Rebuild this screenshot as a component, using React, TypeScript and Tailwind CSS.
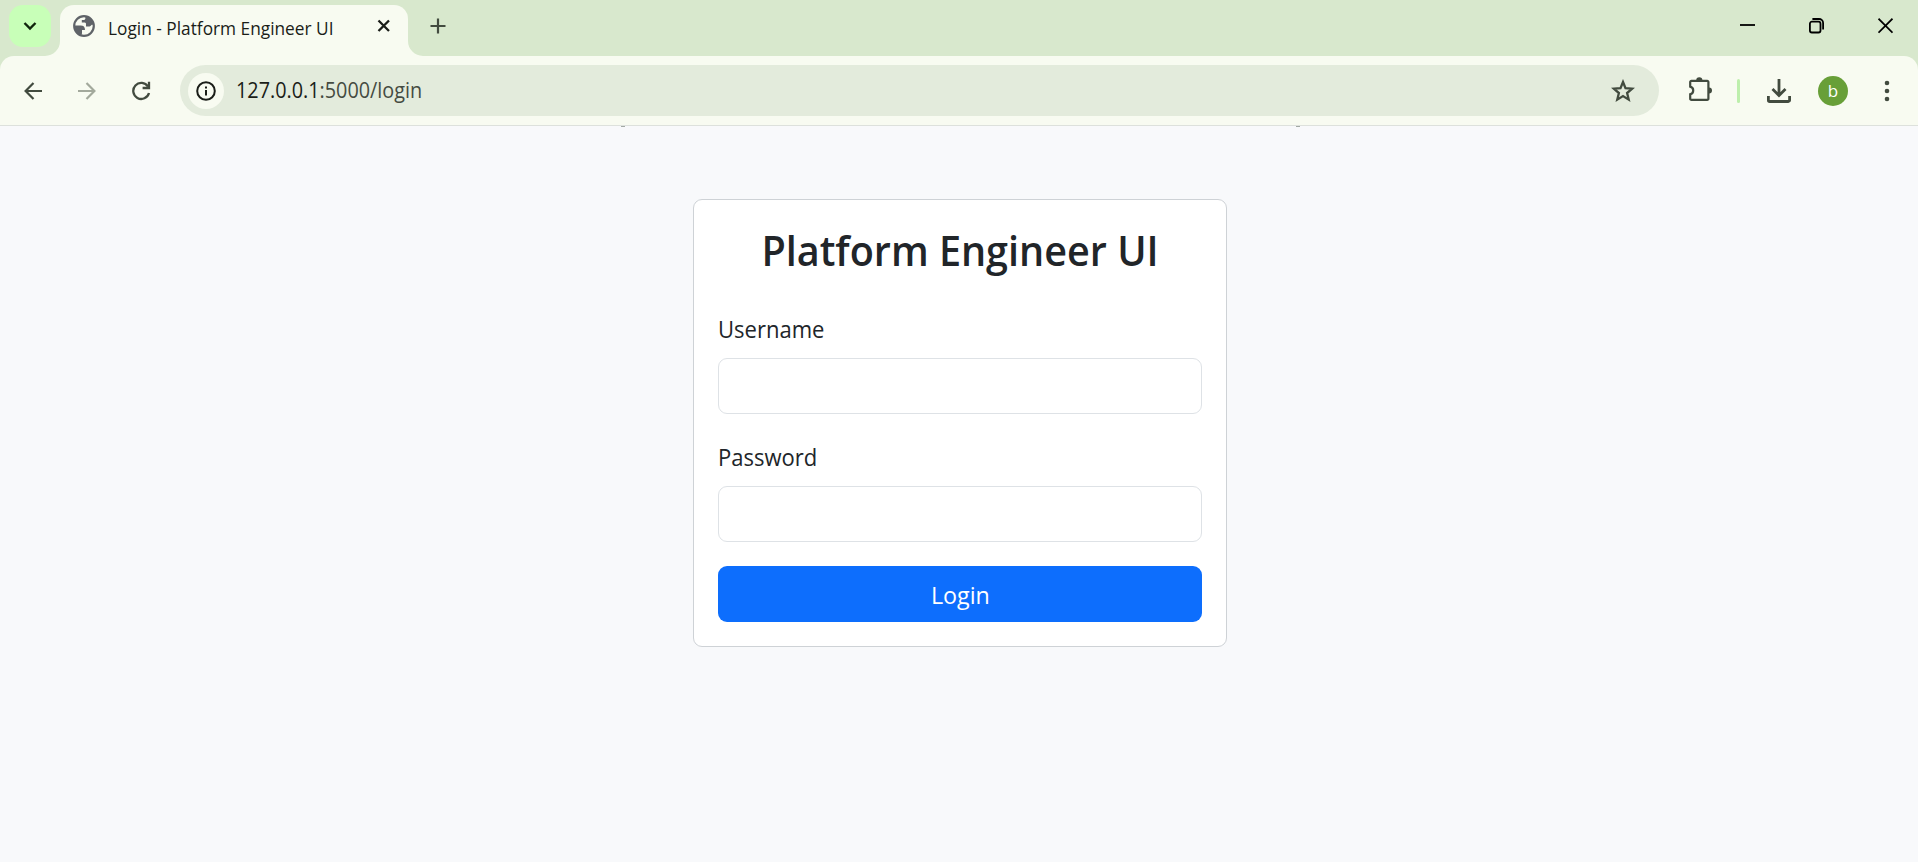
const ink = "#424b3f";

function Globe() {
  return (
    <svg width="22" height="22" viewBox="0 0 22 22">
      <circle cx="11" cy="11" r="9.8" fill="none" stroke="#5f6368" strokeWidth="2.2" />
      <path d="M1 10.6H7.6C10.6 10.6 12 12 12 15H9V18.2L8.4 20.6A10 10 0 0 1 1 10.6Z" fill="#5f6368" />
      <path d="M12.4 1.4V3.2C12.4 4.6 11.4 5 10 5H8.8V7.6H11.6C12.8 7.6 13 8.4 13 9.4V11.4H16.4C17.6 11.4 18 10.2 18.8 9.8H21A10 10 0 0 0 12.4 1.4Z" fill="#5f6368" />
    </svg>
  );
}

function TabStrip() {
  return (
    <header className="flex h-14 items-stretch bg-[#d8e8cd] text-[#1a1d18]">
      <button className="mt-[5px] ml-[9px] flex h-[42px] w-[42px] items-center justify-center rounded-[14px] bg-[#c8ffb8]">
        <svg width="14" height="10" viewBox="0 0 14 10" fill="none" stroke="#10240c" strokeWidth="2.4">
          <path d="M1.5 2 7 7.5 12.5 2" />
        </svg>
      </button>
      <div className="relative mt-[5px] ml-[9px] flex h-[51px] w-[348px] rounded-t-[14px] bg-[#f8fbf1]">
        <svg className="absolute bottom-0 -left-[15px]" width="15" height="15" viewBox="0 0 15 15">
          <path d="M15 0V15H0A15 15 0 0 0 15 0Z" fill="#f8fbf1" />
        </svg>
        <svg className="absolute -right-[15px] bottom-0" width="15" height="15" viewBox="0 0 15 15">
          <path d="M0 0V15H15A15 15 0 0 1 0 0Z" fill="#f8fbf1" />
        </svg>
        <div className="flex h-[42px] w-full items-center pl-[13px]">
          <Globe />
          <span className="mt-[3px] ml-[13px] w-[240px] origin-left scale-x-[0.96] text-[18px] leading-6 whitespace-nowrap">Login - Platform Engineer UI</span>
          <svg className="ml-[29px]" width="14" height="14" viewBox="0 0 14 14" stroke="#1a1d18" strokeWidth="2.3">
            <path d="M1.5 1.5 12 12M12 1.5 1.5 12" />
          </svg>
        </div>
      </div>
      <svg className="mt-[18px] ml-[22px]" width="16" height="16" viewBox="0 0 16 16" stroke={ink} strokeWidth="2.2">
        <path d="M8 .5V15.5M.5 8H15.5" />
      </svg>
      <div className="mt-[18px] ml-auto flex h-4 items-center pr-[25px]">
        <svg width="15" height="16" viewBox="0 0 15 16" stroke="#000" strokeWidth="1.8">
          <path d="M0 7H15" />
        </svg>
        <svg className="ml-[54px]" width="15" height="16" viewBox="0 0 15 16" fill="none" stroke="#000" strokeWidth="1.8">
          <rect x=".9" y="3.7" width="10.6" height="10.8" rx="2" />
          <path d="M3.4 1H10A4.1 4.1 0 0 1 14.1 5.1V11.6" />
        </svg>
        <svg className="ml-[54px]" width="15" height="16" viewBox="0 0 15 16" stroke="#000" strokeWidth="1.8">
          <path d="M.5 .7 14.5 14.7M14.5 .7 .5 14.7" />
        </svg>
      </div>
    </header>
  );
}

function Toolbar() {
  return (
    <div className="bg-[#d8e8cd]">
      <nav className="flex h-[70px] items-center rounded-t-[14px] border-b border-[#dde1dc] bg-[#f8fbf1]">
        <svg className="ml-6" width="18" height="18" viewBox="0 0 18 18" fill="none" stroke={ink} strokeWidth="2.2">
          <path d="M18 9H1.8M9.5 1 1.6 9 9.5 17" />
        </svg>
        <svg className="ml-9" width="18" height="18" viewBox="0 0 18 18" fill="none" stroke="#a3a99c" strokeWidth="2.2">
          <path d="M0 9H16.2M8.5 1 16.4 9 8.5 17" />
        </svg>
        <svg className="ml-9" width="19" height="20" viewBox="0 0 19 20" fill="none" stroke={ink} strokeWidth="2.3">
          <path d="M16 5.6A8 8 0 1 0 17 12" />
          <path d="M17 .8V7H10.6" />
        </svg>
        <div className="ml-[29px] flex h-[51px] w-[1479px] items-center rounded-full bg-[#e3ebdc] pl-2">
          <span className="flex h-9 w-9 items-center justify-center rounded-full bg-[#f8fbf1]">
            <svg width="20" height="20" viewBox="0 0 20 20" fill="none" stroke="#1a1d18" strokeWidth="2">
              <circle cx="10" cy="10" r="8.8" />
              <path d="M10 9V14.5M10 5.4V7.6" />
            </svg>
          </span>
          <span className="mt-px ml-3 origin-left scale-x-[0.943] text-[21px] whitespace-nowrap text-[#454b42]">
            <span className="text-[#1a1d18]">127.0.0.1</span>:5000/login
          </span>
          <svg className="mr-6 ml-auto" width="24" height="24" viewBox="0 0 24 24" fill="none" stroke={ink} strokeWidth="2.3">
            <path d="M12 3 14.5 9.2 21.2 9.7 16.1 14 17.7 20.6 12 17 6.3 20.6 7.9 14 2.8 9.7 9.5 9.2Z" />
          </svg>
        </div>
        <svg className="mb-[3px] ml-[29px]" width="25" height="26" viewBox="0 0 25 26" fill="none" stroke={ink} strokeWidth="2.2">
          <path d="M3.4 4.9H19.2A1.2 1.2 0 0 1 20.4 6.1V22.7A1.2 1.2 0 0 1 19.2 23.9H3.4A1.2 1.2 0 0 1 2.2 22.7V18.2A3.9 3.9 0 0 0 2.2 10.6V6.1A1.2 1.2 0 0 1 3.4 4.9Z" />
          <path d="M8.2 4.4A3 3 0 0 1 14.4 4.4ZM21 11.4A3 3 0 0 1 21 17.4Z" fill={ink} stroke="none" />
        </svg>
        <div className="ml-[24px] h-6 w-[3px] rounded-full bg-[#bdefac]" />
        <svg className="ml-[27px]" width="24" height="24" viewBox="0 0 24 24" fill="none" stroke={ink} strokeWidth="2.8">
          <path d="M12 0V16.5M5.5 10 12 16.5 18.5 10M1.4 17V21.2A1.3 1.3 0 0 0 2.7 22.5H21.3A1.3 1.3 0 0 0 22.6 21.2V17" />
        </svg>
        <span className="ml-[27px] flex h-[30px] w-[30px] items-center justify-center rounded-full bg-[#689f38] text-[17px] text-white">b</span>
        <svg className="ml-[36px]" width="6" height="22" viewBox="0 0 6 22" fill={ink}>
          <circle cx="3" cy="3" r="2.3" />
          <circle cx="3" cy="11" r="2.3" />
          <circle cx="3" cy="19" r="2.3" />
        </svg>
      </nav>
    </div>
  );
}

function Field({ label, type }: { label: string; type: string }) {
  return (
    <label className="mb-6 block pt-px text-[24px] leading-9">
      <span className="block origin-left scale-x-[0.918]">{label}</span>
      <input type={type} className="mt-[11px] block h-14 w-full rounded-[9px] border border-[#dee2e6] bg-white px-4 outline-none" />
    </label>
  );
}

export default function App() {
  return (
    <div className="flex h-[862px] w-full flex-col overflow-hidden bg-[#f8f9fb] font-['Open_Sans','Noto_Sans',sans-serif]">
      <TabStrip />
      <Toolbar />
      <main className="relative flex flex-1 flex-col items-center pl-[2px] text-[#212529]">
        <i className="absolute top-0 left-[621px] h-px w-[4px] bg-[#a3aaa5]" />
        <i className="absolute top-0 left-[1296px] h-px w-[4px] bg-[#a3aaa5]" />
        <section className="mt-[73px] h-[448px] w-[534px] rounded-[9px] border border-[#ced2d6] bg-white px-6 pt-[23px]">
          <h3 className="scale-x-[0.942] text-center text-[42px] leading-[54px] font-semibold whitespace-nowrap">Platform Engineer UI</h3>
          <form className="mt-[33px]">
            <Field label="Username" type="text" />
            <Field label="Password" type="password" />
            <button type="button" className="h-14 w-full rounded-[9px] bg-[#0d6efd] pt-[2px] text-[24px] text-white">
              <span className="inline-block scale-x-[0.97]">Login</span>
            </button>
          </form>
        </section>
      </main>
    </div>
  );
}
